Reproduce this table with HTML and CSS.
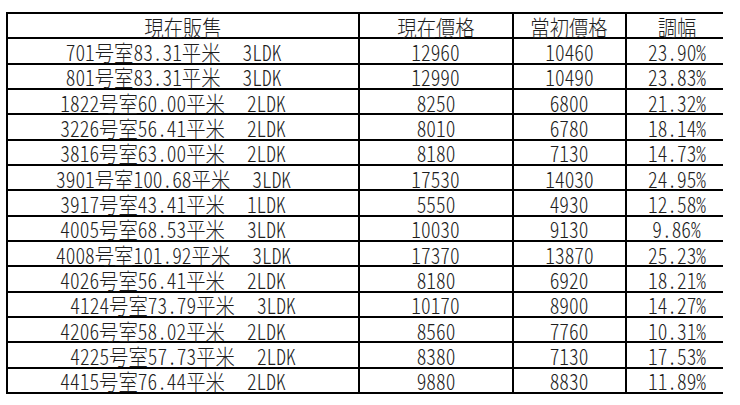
FILE: index.html
```html
<!DOCTYPE html>
<html lang="ja">
<head>
<meta charset="utf-8">
<title>現在販售</title>
<link rel="stylesheet" href="styles.css">
</head>
<body>
<div class="sheet">
  <div class="cell c1 nopad"><span class="t">現在販售</span></div>
  <div class="cell"><span class="t">現在價格</span></div>
  <div class="cell"><span class="t">當初價格</span></div>
  <div class="cell"><span class="t">調幅</span></div>

  <div class="cell c1"><span class="t">701号室83.31平米<span class="sp"></span>3LDK</span></div>
  <div class="cell"><span class="t">12960</span></div>
  <div class="cell"><span class="t">10460</span></div>
  <div class="cell"><span class="t">23.90%</span></div>

  <div class="cell c1"><span class="t">801号室83.31平米<span class="sp"></span>3LDK</span></div>
  <div class="cell"><span class="t">12990</span></div>
  <div class="cell"><span class="t">10490</span></div>
  <div class="cell"><span class="t">23.83%</span></div>

  <div class="cell c1"><span class="t">1822号室60.00平米<span class="sp"></span>2LDK</span></div>
  <div class="cell"><span class="t">8250</span></div>
  <div class="cell"><span class="t">6800</span></div>
  <div class="cell"><span class="t">21.32%</span></div>

  <div class="cell c1"><span class="t">3226号室56.41平米<span class="sp"></span>2LDK</span></div>
  <div class="cell"><span class="t">8010</span></div>
  <div class="cell"><span class="t">6780</span></div>
  <div class="cell"><span class="t">18.14%</span></div>

  <div class="cell c1"><span class="t">3816号室63.00平米<span class="sp"></span>2LDK</span></div>
  <div class="cell"><span class="t">8180</span></div>
  <div class="cell"><span class="t">7130</span></div>
  <div class="cell"><span class="t">14.73%</span></div>

  <div class="cell c1"><span class="t">3901号室100.68平米<span class="sp"></span>3LDK</span></div>
  <div class="cell"><span class="t">17530</span></div>
  <div class="cell"><span class="t">14030</span></div>
  <div class="cell"><span class="t">24.95%</span></div>

  <div class="cell c1"><span class="t">3917号室43.41平米<span class="sp"></span>1LDK</span></div>
  <div class="cell"><span class="t">5550</span></div>
  <div class="cell"><span class="t">4930</span></div>
  <div class="cell"><span class="t">12.58%</span></div>

  <div class="cell c1"><span class="t">4005号室68.53平米<span class="sp"></span>3LDK</span></div>
  <div class="cell"><span class="t">10030</span></div>
  <div class="cell"><span class="t">9130</span></div>
  <div class="cell"><span class="t">9.86%</span></div>

  <div class="cell c1"><span class="t">4008号室101.92平米<span class="sp"></span>3LDK</span></div>
  <div class="cell"><span class="t">17370</span></div>
  <div class="cell"><span class="t">13870</span></div>
  <div class="cell"><span class="t">25.23%</span></div>

  <div class="cell c1"><span class="t">4026号室56.41平米<span class="sp"></span>2LDK</span></div>
  <div class="cell"><span class="t">8180</span></div>
  <div class="cell"><span class="t">6920</span></div>
  <div class="cell"><span class="t">18.21%</span></div>

  <div class="cell c1 nopad"><span class="t">4124号室73.79平米<span class="sp"></span>3LDK</span></div>
  <div class="cell"><span class="t">10170</span></div>
  <div class="cell"><span class="t">8900</span></div>
  <div class="cell"><span class="t">14.27%</span></div>

  <div class="cell c1"><span class="t">4206号室58.02平米<span class="sp"></span>2LDK</span></div>
  <div class="cell"><span class="t">8560</span></div>
  <div class="cell"><span class="t">7760</span></div>
  <div class="cell"><span class="t">10.31%</span></div>

  <div class="cell c1 nopad"><span class="t">4225号室57.73平米<span class="sp"></span>2LDK</span></div>
  <div class="cell"><span class="t">8380</span></div>
  <div class="cell"><span class="t">7130</span></div>
  <div class="cell"><span class="t">17.53%</span></div>

  <div class="cell c1"><span class="t">4415号室76.44平米<span class="sp"></span>2LDK</span></div>
  <div class="cell"><span class="t">9880</span></div>
  <div class="cell"><span class="t">8830</span></div>
  <div class="cell"><span class="t">11.89%</span></div>
</div>
</body>
</html>
```

FILE: styles.css
```css
html, body {
  margin: 0;
  padding: 0;
  background: #ffffff;
}

body {
  padding: 12px 0 0 6px;
  font-family: "Noto Sans CJK JP", "Noto Sans CJK SC", sans-serif;
}

.sheet {
  display: grid;
  grid-template-columns: 350px 152px 111px 100px;
  grid-template-rows: repeat(15, 1fr);
  gap: 2px;
  width: 713px;
  height: 378px;
  border: 2px solid #000;
  background: #000;
}

.cell {
  background: #fff;
  display: flex;
  align-items: center;
  justify-content: center;
  min-height: 0;
}

.c1 {
  padding-right: 19px;
}

.c1.nopad {
  padding-right: 0;
}

.t {
  display: inline-block;
  font-size: 22px;
  line-height: 20px;
  font-weight: 300;
  color: #1e1e1e;
  white-space: nowrap;
  font-feature-settings: "hwid" 1;
  transform: scaleX(0.88);
}

.sp {
  display: inline-block;
  width: 25px;
}
```
